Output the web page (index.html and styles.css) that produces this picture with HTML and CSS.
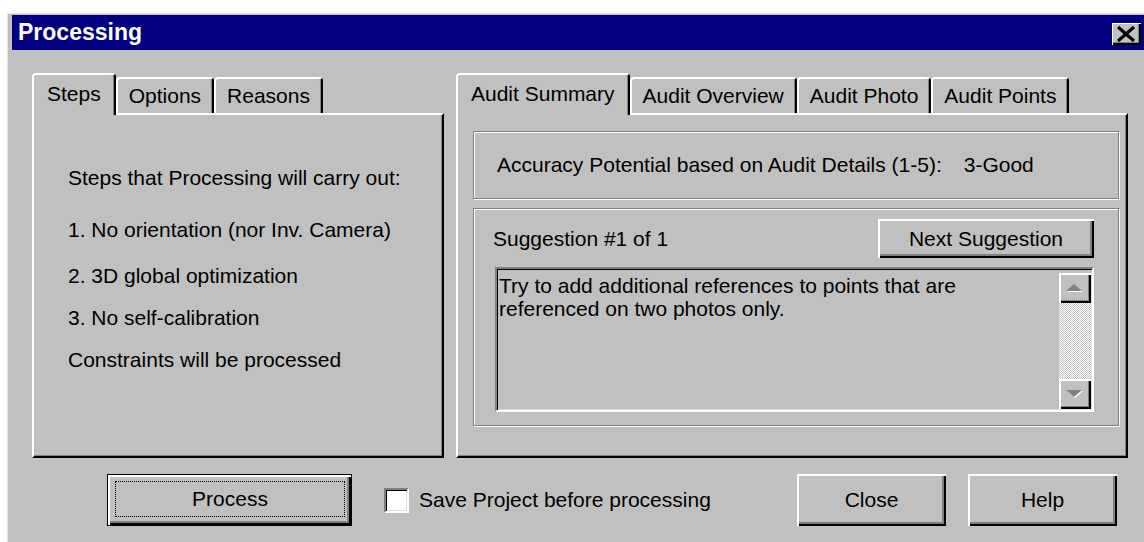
FILE: index.html
```html
<!DOCTYPE html>
<html lang="en">
<head>
<meta charset="utf-8">
<title>Processing</title>
<link rel="stylesheet" href="styles.css">
</head>
<body>
<div class="window">
  <div class="titlebar">
    <span class="title">Processing</span>
    <button class="title-close" aria-label="Close">
      <svg width="20" height="16" viewBox="0 0 20 16"><path d="M2 1 L18 15 M18 1 L2 15" stroke="#000" stroke-width="3.2" fill="none"/></svg>
    </button>
  </div>

  <div class="client">
    <div class="tabsets">
      <section class="tabset tabset-steps">
        <div class="tabstrip">
          <div class="tab active">Steps</div>
          <div class="tab">Options</div>
          <div class="tab">Reasons</div>
        </div>
        <div class="tabpanel steps-panel">
          <p class="step-intro">Steps that Processing will carry out:</p>
          <p class="step step-first">1. No orientation (nor Inv. Camera)</p>
          <p class="step step-second">2. 3D global optimization</p>
          <p class="step">3. No self-calibration</p>
          <p class="step">Constraints will be processed</p>
        </div>
      </section>

      <section class="tabset tabset-audit">
        <div class="tabstrip">
          <div class="tab active">Audit Summary</div>
          <div class="tab">Audit Overview</div>
          <div class="tab">Audit Photo</div>
          <div class="tab">Audit Points</div>
        </div>
        <div class="tabpanel audit-panel">
          <div class="groupbox accuracy">
            <span>Accuracy Potential based on Audit Details (1-5):</span>
            <span class="accuracy-value">3-Good</span>
          </div>
          <div class="groupbox suggestion">
            <div class="suggestion-head">
              <span>Suggestion #1 of 1</span>
              <button class="btn btn-next">Next Suggestion</button>
            </div>
            <div class="memo">
              <div class="memo-text">Try to add additional references to points that are<br>referenced on two photos only.</div>
              <div class="scrollbar">
                <div class="sb-btn">
                  <svg width="18" height="9" viewBox="0 0 18 9"><path d="M9 1 L17 8 H1 Z" fill="#fff"/><path d="M8 0 L16 7 H0 Z" fill="#808080"/></svg>
                </div>
                <div class="sb-track"></div>
                <div class="sb-btn">
                  <svg width="18" height="9" viewBox="0 0 18 9"><path d="M1 1 H17 L9 8 Z" fill="#fff"/><path d="M0 0 H16 L8 7 Z" fill="#808080"/></svg>
                </div>
              </div>
            </div>
          </div>
        </div>
      </section>
    </div>

    <div class="actions">
      <button class="btn btn-default btn-process"><span class="focus">Process</span></button>
      <label class="check">
        <span class="check-box"></span>
        <span>Save Project before processing</span>
      </label>
      <button class="btn btn-close">Close</button>
      <button class="btn btn-help">Help</button>
    </div>
  </div>
</div>
</body>
</html>
```

FILE: styles.css
```css
* {
  box-sizing: border-box;
}

html,
body {
  margin: 0;
  height: 100%;
  overflow: hidden;
  background: #fff;
}

body {
  padding: 13px 0 0 7px;
  font-family: "Liberation Sans", Arial, sans-serif;
  font-size: 21px;
  color: #000;
}

p {
  margin: 0;
}

/* dialog frame */
.window {
  width: 1139px;
  height: 529px;
  padding: 1px 0 0 4px;
  border-left: 1px solid #e8e6d8;
  border-top: 1px solid #e8e6d8;
  background: #c0c0c0;
  display: flex;
  flex-direction: column;
}

.titlebar {
  height: 35px;
  flex: none;
  background: #000080;
  display: flex;
  align-items: flex-start;
  padding: 0 5px 0 6px;
}

.title {
  flex: 1;
  color: #fff;
  font-weight: bold;
  font-size: 23px;
  line-height: 35px;
}

.title-close {
  margin-top: 8px;
  width: 29px;
  height: 22px;
  padding: 0 1px 1px 0;
  border: 0;
  background: #c0c0c0;
  box-shadow: inset 1px 1px #fff, inset -2px -2px #000, inset -3px -3px #808080;
  display: flex;
  align-items: center;
  justify-content: center;
}

.client {
  flex: 1;
  padding: 23px 18px 0 20px;
}

/* tab controls */
.tabsets {
  display: flex;
  gap: 12px;
}

.tabset-steps {
  width: 412px;
}

.tabset-audit {
  flex: 1;
}

.tabstrip {
  height: 40px;
  display: flex;
  align-items: flex-end;
}

.tab {
  height: 36px;
  padding: 0 11px;
  display: flex;
  align-items: center;
  white-space: nowrap;
  border: 2px solid;
  border-bottom: 0;
  border-color: #fff #000 transparent #fff;
  border-radius: 4px 4px 0 0;
  box-shadow: inset -1px 0 #808080;
}

.tab.active {
  position: relative;
  z-index: 1;
  height: 42px;
  margin-bottom: -2px;
  padding: 0 13px 2px;
  background: #c0c0c0;
}

.tabpanel {
  height: 345px;
  border: 2px solid;
  border-color: #fff #000 #000 #fff;
  box-shadow: inset -1px -1px #808080;
}

.steps-panel {
  padding: 51px 0 0 34px;
  line-height: 24px;
}

.step {
  margin-top: 18px;
}

.step-first {
  margin-top: 28px;
}

.step-second {
  margin-top: 22px;
}

.audit-panel {
  padding: 16px 7px 0 15px;
}

/* etched group frames */
.groupbox {
  border: 1px solid #808080;
  box-shadow: inset 1px 1px #fff, 1px 1px #fff;
}

.accuracy {
  height: 68px;
  display: flex;
  align-items: center;
  padding-left: 23px;
}

.accuracy-value {
  margin-left: 22px;
}

.suggestion {
  margin-top: 9px;
  height: 218px;
  padding: 10px 24px 0 19px;
}

.suggestion-head {
  height: 39px;
  display: flex;
  align-items: center;
  justify-content: space-between;
}

.btn-next {
  width: 216px;
  height: 39px;
}

.memo {
  margin: 9px 0 0 2px;
  height: 145px;
  display: flex;
  border: 2px solid;
  border-color: #808080 #fff #fff #808080;
  box-shadow: inset 1px 1px #000, inset -1px -1px #dfdfdf;
  background: #c0c0c0;
}

.memo-text {
  flex: 1;
  padding: 5px 0 0 2px;
  line-height: 23px;
}

.scrollbar {
  width: 32px;
  margin: 4px 1px 1px 0;
  display: flex;
  flex-direction: column;
}

.sb-btn {
  height: 30px;
  flex: none;
  display: flex;
  align-items: center;
  justify-content: center;
  background: #c0c0c0;
  box-shadow: inset 2px 2px #fff, inset -2px -2px #000, inset -3px -3px #808080;
}

.sb-track {
  flex: 1;
  background-color: #c0c0c0;
  background-image: conic-gradient(#fff 25%, #c0c0c0 0 50%, #fff 0 75%, #c0c0c0 0);
  background-size: 2px 2px;
}

/* push buttons */
.btn {
  font: inherit;
  color: #000;
  background: #c0c0c0;
  border: 0;
  padding: 0;
  box-shadow: inset 2px 2px #fff, inset -2px -2px #000, inset -4px -4px #808080;
}

.btn-default {
  border: 1px solid #000;
}

.actions {
  height: 52px;
  margin-top: 16px;
  display: flex;
  align-items: center;
  padding: 0 11px 0 75px;
}

.btn-process {
  width: 245px;
  height: 52px;
  padding: 6px 6px 8px 7px;
  display: flex;
}

.focus {
  flex: 1;
  display: flex;
  align-items: center;
  justify-content: center;
  border: 1px dotted #000;
}

.check {
  margin-left: 32px;
  display: flex;
  align-items: center;
  gap: 10px;
}

.check-box {
  width: 25px;
  height: 25px;
  background: #fff;
  border: 2px solid;
  border-color: #808080 #fff #fff #808080;
  box-shadow: inset 1px 1px #000, inset -1px -1px #dfdfdf;
}

.btn-close {
  margin-left: auto;
  width: 149px;
  height: 52px;
}

.btn-help {
  margin-left: 22px;
  width: 149px;
  height: 52px;
}
```
